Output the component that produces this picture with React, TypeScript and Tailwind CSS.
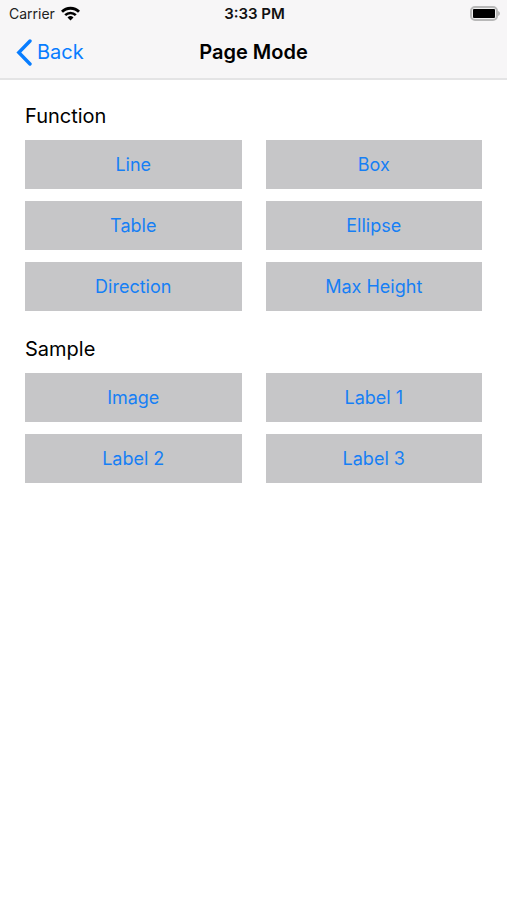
const sections = [
  { title: 'Function', items: ['Line', 'Box', 'Table', 'Ellipse', 'Direction', 'Max Height'] },
  { title: 'Sample', items: ['Image', 'Label 1', 'Label 2', 'Label 3'] },
];

function StatusBar() {
  return (
    <div className="grid grid-cols-3 items-center h-7 pl-[9px] pr-[7px] text-sm">
      <div className="flex items-center gap-[6px] text-[#222222]">
        <span>Carrier</span>
        <svg width="19" height="17" viewBox="0 0 19 17" fill="none" stroke="black" aria-hidden="true">
          <path d="M1 5.8a12 12 0 0 1 17 0" strokeWidth="2.8" />
          <path d="M4.2 9.2a7.5 7.5 0 0 1 10.6 0" strokeWidth="2.6" />
          <path d="M9.5 14.6 6.5 11.4a4.300 4.300 0 0 1 6 0Z" fill="black" stroke="none" />
        </svg>
      </div>
      <span className="text-center text-[15px] font-semibold text-[#111111]">3:33 PM</span>
      <svg className="justify-self-end" width="30" height="17" viewBox="0 0 30 17" aria-hidden="true">
        <rect x="1" y="1" width="26" height="13" rx="4" fill="#f0f0f0" stroke="#b8b8b8" strokeWidth="2" />
        <rect x="3" y="3" width="22" height="9" rx="1" fill="black" />
        <path d="M28 5v5c1.400-.4 2-1.400 2-2.500s-.6-2.100-2-2.500Z" fill="#b8b8b8" />
      </svg>
    </div>
  );
}

function NavBar() {
  return (
    <div className="grid grid-cols-[1fr_auto_1fr] items-center h-12 mb-[2px] px-4 text-xl">
      <button type="button" className="flex items-center gap-1 justify-self-start text-[#087dff]">
        <svg
          width="17"
          height="28"
          viewBox="0 0 17 28"
          fill="none"
          stroke="currentColor"
          strokeWidth="3.4"
          strokeLinecap="round"
          aria-hidden="true"
        >
          <path d="M14 3 2.800 14.500 14 26" />
        </svg>
        Back
      </button>
      <h1 className="font-semibold">Page Mode</h1>
    </div>
  );
}

export default function App() {
  return (
    <div className="min-h-screen bg-white text-black font-['Inter','Liberation_Sans',sans-serif]">
      <header className="bg-[#f7f6f7] border-b-2 border-[#e4e4e5]">
        <StatusBar />
        <NavBar />
      </header>
      <main className="px-[25px] pt-[22px]">
        {sections.map((section) => (
          <section key={section.title} className="mb-6">
            <h2 className="mb-[10px] text-xl leading-7">{section.title}</h2>
            <div className="grid grid-cols-2 gap-x-6 gap-y-3">
              {section.items.map((item) => (
                <button key={item} type="button" className="h-[49px] bg-[#c6c6c8] text-lg text-[#167ff5]">
                  {item}
                </button>
              ))}
            </div>
          </section>
        ))}
      </main>
    </div>
  );
}
